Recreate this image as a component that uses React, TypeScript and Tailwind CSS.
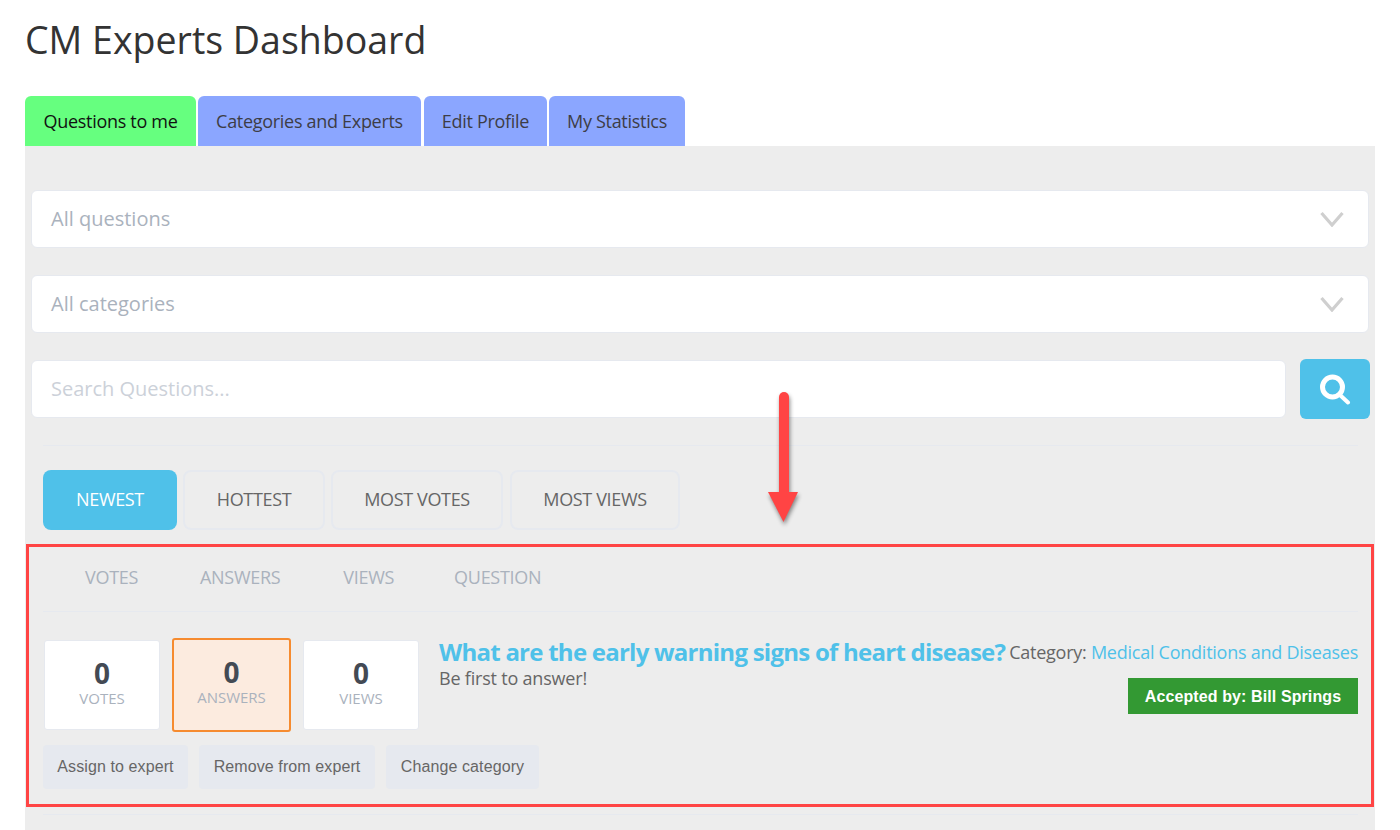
const font = "font-['Open_Sans',sans-serif]";

function Tab({ label, active, width }: { label: string; active?: boolean; width: string }) {
  return (
    <div
      className={`${width} h-[50px] rounded-t-[6px] flex items-center justify-center text-[18px] tracking-[-0.3px] ${
        active ? "bg-[#66ff7f] text-[#111111]" : "bg-[#8ba6ff] text-[#3d3d46]"
      }`}
    >
      {label}
    </div>
  );
}

function SelectBox({ label }: { label: string }) {
  return (
    <div className="mx-[6px] h-[58px] bg-white border border-[#e6e9ef] rounded-[6px] flex items-center justify-between pl-[19px] pr-[24px]">
      <span className="text-[20px] text-[#aab2bd]">{label}</span>
      <svg width="24" height="16" viewBox="0 0 24 16" fill="none" stroke="#cfcfcf" strokeWidth="3.2">
        <path d="M1.5 2 12 14 22.5 2" />
      </svg>
    </div>
  );
}

function SortTab({ label, active, width }: { label: string; active?: boolean; width: string }) {
  return (
    <div
      className={`${width} h-[60px] pb-[2px] rounded-[8px] flex items-center justify-center text-[18px] tracking-[-0.35px] ${
        active ? "bg-[#4fc1e9] text-white" : "border-2 border-[#e6e9ef] text-[#666666]"
      }`}
    >
      {label}
    </div>
  );
}

function Stat({ label, highlight, width }: { label: string; highlight?: boolean; width: string }) {
  return (
    <div
      className={`${width} flex flex-col items-center rounded-[3px] ${
        highlight
          ? "h-[94px] pt-[16px] bg-[#fcebdf] border-2 border-[#f68b2f]"
          : "h-[90px] my-[2px] pt-[16px] bg-white border border-[#e6e9ef]"
      }`}
    >
      <span className="text-[28px] leading-[32px] font-bold text-[#434a54]">0</span>
      <span className="text-[15px] leading-[19px] text-[#aab2bd]">{label}</span>
    </div>
  );
}

function ActionButton({ label, width }: { label: string; width: string }) {
  return (
    <div className={`${width} h-[44px] rounded-[4px] bg-[#e6e9ef] flex items-center justify-center text-[16px] tracking-[0.1px] text-[#666666] font-['Liberation_Sans',sans-serif]`}>
      {label}
    </div>
  );
}

export default function App() {
  return (
    <div className={`relative w-[1400px] h-[830px] overflow-hidden bg-white ${font}`}>
      <div className="px-[25px]">
        <h1 className="h-[96px] pt-[12px] text-[37.5px] leading-[56px] text-[#333333]">CM Experts Dashboard</h1>

        <div className="flex gap-[2px]">
          <Tab label="Questions to me" active width="w-[171px]" />
          <Tab label="Categories and Experts" width="w-[223px] mr-[1px]" />
          <Tab label="Edit Profile" width="w-[123px]" />
          <Tab label="My Statistics" width="w-[136px]" />
        </div>

        <div className="bg-[#ededed] h-[684px] pt-[44px]">
          <div className="flex flex-col gap-[27px]">
            <SelectBox label="All questions" />
            <SelectBox label="All categories" />
          </div>

          <div className="flex items-center mt-[26px] pl-[6px] pr-[5px] gap-[14px]">
            <div className="flex-1 h-[58px] bg-white border border-[#e6e9ef] rounded-[6px] flex items-center pl-[19px] text-[20px] text-[#ccd1d9]">
              Search Questions...
            </div>
            <div className="w-[70px] h-[60px] rounded-[6px] bg-[#4fc1e9] flex items-center justify-center">
              <svg viewBox="0 0 32 32" className="size-[32px]" fill="none" stroke="white" strokeLinecap="round">
                <circle cx="13.5" cy="14" r="10" strokeWidth="5" />
                <path d="M21.5 22.5 29 29.5" strokeWidth="4" />
              </svg>
            </div>
          </div>

          <div className="ml-[18px] mr-[17px] mt-[26px] border-t border-[#e6e9ef]" />

          <div className="flex gap-[6px] mx-[18px] mt-[24px]">
            <SortTab label="NEWEST" active width="w-[134px]" />
            <SortTab label="HOTTEST" width="w-[142px]" />
            <SortTab label="MOST VOTES" width="w-[172px] mr-[1px]" />
            <SortTab label="MOST VIEWS" width="w-[170px]" />
          </div>

          <div className="flex h-[82px] pt-[14px] items-center ml-[18px] mr-[17px] text-[18px] tracking-[-0.3px] text-[#aab2bd] border-b border-[#e6e9ef]">
            <span className="ml-[42px]">VOTES</span>
            <span className="ml-[62px]">ANSWERS</span>
            <span className="ml-[63px]">VIEWS</span>
            <span className="ml-[60px]">QUESTION</span>
          </div>

          <div className="ml-[18px] mr-[17px] flex mt-[25px]">
            <div className="flex gap-[12px] shrink-0 ml-[1px] mt-[1px]">
              <Stat label="VOTES" width="w-[116px]" />
              <Stat label="ANSWERS" highlight width="w-[119px]" />
              <Stat label="VIEWS" width="w-[116px]" />
            </div>
            <div className="flex-1 min-w-0 ml-[20px] mt-[1px]">
              <div className="flex items-center justify-between h-[27px] whitespace-nowrap">
                <span className="text-[24px] leading-[27px] font-bold text-[#4fc1e9] tracking-[-0.75px]">What are the early warning signs of heart disease?</span>
                <span className="text-[18px] leading-[27px] tracking-[-0.25px] text-[#666666] pt-[1px]">
                  Category: <span className="text-[#4fc1e9]">Medical Conditions and Diseases</span>
                </span>
              </div>
              <div className="flex justify-between items-start mt-[1px]">
                <span className="text-[18px] leading-[24px] tracking-[-0.2px] text-[#666666]">Be first to answer!</span>
                <div className="mt-[12px] w-[230px] h-[36px] pt-[1px] bg-[#339933] flex items-center justify-center text-[16px] tracking-[0.1px] font-bold text-white font-['Liberation_Sans',sans-serif]">
                  Accepted by: Bill Springs
                </div>
              </div>
            </div>
          </div>

          <div className="flex mx-[18px] gap-[11px] mt-[13px]">
            <ActionButton label="Assign to expert" width="w-[145px]" />
            <ActionButton label="Remove from expert" width="w-[176px]" />
            <ActionButton label="Change category" width="w-[153px]" />
          </div>

          <div className="ml-[18px] mr-[17px] mt-[25px] border-t border-[#e6e9ef]" />
        </div>
      </div>

      {/* annotations drawn over the screenshot */}
      <div className="absolute left-[26px] top-[544px] w-[1348px] h-[263px] border-[3px] border-[#ff4444]" />
      <svg className="absolute left-[760px] top-[385px] drop-shadow-[1px_3px_2px_rgba(0,0,0,0.45)]" width="48" height="140" viewBox="0 0 48 140" fill="none">
        <path d="M24 12 V 108" stroke="#ff4444" strokeWidth="10" strokeLinecap="round" />
        <path d="M8 107 H38 L23.5 137 Z" fill="#ff4444" />
      </svg>
    </div>
  );
}
